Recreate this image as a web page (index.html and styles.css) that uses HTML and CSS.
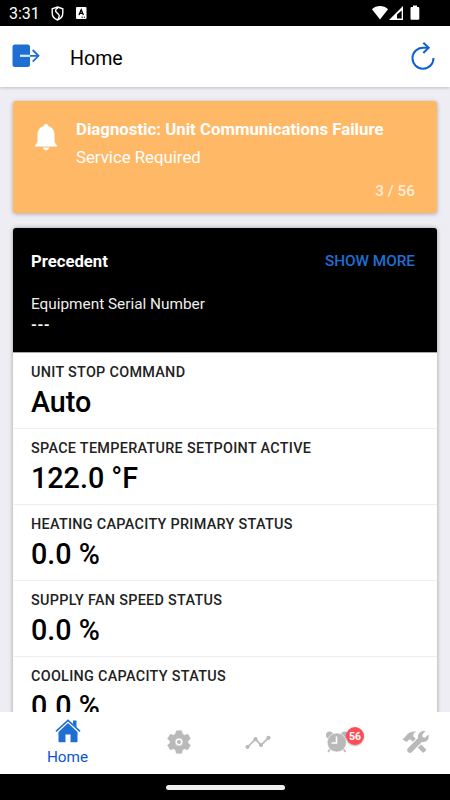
FILE: index.html
```html
<!DOCTYPE html>
<html lang="en">
<head>
    <meta charset="UTF-8">
    <meta name="viewport" content="width=device-width, initial-scale=1.0">
    <title>Home</title>
    <link rel="stylesheet" href="styles.css">
</head>
<body>
    <div class="status-bar">
        <span class="clock">3:31</span>
        <svg class="shield" width="13" height="15" viewBox="0 0 14 16" fill="none" stroke="#fff" stroke-width="1.500">
            <path d="M7 1 L12.700 3 V7.500 C12.700 11 10.300 13.800 7 15 C3.700 13.800 1.300 11 1.300 7.500 V3 Z"/>
            <path d="M7.500 2 C4 4 4.500 5.800 6.500 7.300 C9.500 9.300 9.500 11.500 7.500 14"/>
        </svg>
        <svg class="app-badge" width="11" height="12" viewBox="0 0 11 12">
            <rect width="10.500" height="12" rx="1" fill="#fff"/>
            <path d="M3 8 L5.200 2.700 L7.400 8 M3.800 6.400 H6.600" fill="none" stroke="#000" stroke-width="1.300"/>
            <path d="M5.500 10.200 H6.800 M7.800 10.200 H9" stroke="#000"/>
        </svg>
        <svg class="signals" width="49" height="15" viewBox="0 0 49 15" fill="#fff">
            <path d="M8 14.500 L0 4.200 C4.500 0 11.500 0 16 4.200 Z"/>
            <path d="M31 1 V15 H17 Z"/>
            <path d="M29.700 5.500 V13.500 H25 V9.500 Z" fill="#000"/>
            <path d="M41 0.500 H45 V2 H46.300 Q47.300 2 47.300 3 V13.800 Q47.300 14.800 46.300 14.800 H39.500 Q38.500 14.800 38.500 13.800 V3 Q38.500 2 39.500 2 H41 Z"/>
        </svg>
    </div>

    <header class="app-header">
        <svg class="logout" width="28" height="24" viewBox="0 0 28 24">
            <rect x="0.500" y="0.500" width="17.500" height="22.500" rx="2.500" fill="#1f6fd3"/>
            <path d="M8 11.800 H18" stroke="#dbe8f8" stroke-width="2.200"/>
            <path d="M18 11.800 H26.500 M20.700 6 L26.500 11.800 L20.700 17.600" fill="none" stroke="#1f6fd3" stroke-width="1.800"/>
        </svg>
        <h1>Home</h1>
        <svg class="refresh" width="24" height="28" viewBox="0 0 24 28" fill="none" stroke="#0d62d0" stroke-width="2">
            <path d="M22.500 16 A10.500 10.500 0 1 1 12 5.700 H17.500"/>
            <path d="M12.300 0.800 L17.700 5.800 L12.300 11"/>
        </svg>
    </header>

    <main class="content">
        <section class="alert">
            <svg class="bell" width="24" height="28" viewBox="0 0 24 28" fill="#fff">
                <path d="M12 0 C13.300 0 14.200 0.800 14.300 2 C18 3 20.500 6.300 20.500 10.500 V17 C20.500 19.500 23.200 20.500 23.200 22.500 H0.800 C0.800 20.500 3.500 19.500 3.500 17 V10.500 C3.500 6.300 6 3 9.700 2 C9.800 0.800 10.700 0 12 0 Z"/>
                <path d="M9 23.500 H15 C14.800 25.200 13.500 26.200 12 26.200 C10.500 26.200 9.200 25.200 9 23.500 Z"/>
            </svg>
            <div class="alert-text">
                <h2>Diagnostic: Unit Communications Failure</h2>
                <p>Service Required</p>
            </div>
            <span class="alert-count">3 / 56</span>
        </section>

        <section class="unit">
            <div class="unit-head">
                <div class="unit-title">
                    <h2>Precedent</h2>
                    <a class="show-more">SHOW MORE</a>
                </div>
                <p class="serial-label">Equipment Serial Number</p>
                <p class="serial">---</p>
            </div>
            <ul class="readings">
                <li>
                    <span class="label">UNIT STOP COMMAND</span>
                    <span class="value">Auto</span>
                </li>
                <li>
                    <span class="label">SPACE TEMPERATURE SETPOINT ACTIVE</span>
                    <span class="value">122.0 °F</span>
                </li>
                <li>
                    <span class="label">HEATING CAPACITY PRIMARY STATUS</span>
                    <span class="value">0.0 %</span>
                </li>
                <li>
                    <span class="label">SUPPLY FAN SPEED STATUS</span>
                    <span class="value">0.0 %</span>
                </li>
                <li>
                    <span class="label">COOLING CAPACITY STATUS</span>
                    <span class="value">0.0 %</span>
                </li>
            </ul>
        </section>
    </main>

    <nav class="tabs">
        <a class="tab active">
            <svg width="26" height="24" viewBox="0 0 26 24">
                <path d="M3.500 13 L13 4 L22.500 13 V22.500 Q22.500 23.300 21.700 23.300 H15.500 V15.500 H10.500 V23.300 H4.300 Q3.500 23.300 3.500 22.500 Z M18 1.500 H21.500 V8.500 L18 5 Z" fill="#1f6fd3"/>
                <path d="M1.500 13.500 L13 3 L24.500 13.500" fill="none" stroke="#fff" stroke-width="1"/>
                <path d="M1 12.300 L13 1.300 L25 12.300" fill="none" stroke="#1f6fd3" stroke-width="1.600"/>
            </svg>
            <span>Home</span>
        </a>
        <a class="tab">
            <svg width="24" height="24" viewBox="0 0 24 24" fill="#b9b9b9" fill-rule="evenodd">
                <path d="M9.300 0.800 H14.700 L15.400 4.100 L17.500 5.300 L20.700 4.200 L23.400 8.800 L20.900 11 V13 L23.400 15.200 L20.700 19.800 L17.500 18.700 L15.400 19.900 L14.700 23.200 H9.300 L8.600 19.900 L6.500 18.700 L3.300 19.800 L0.600 15.200 L3.100 13 V11 L0.600 8.800 L3.300 4.200 L6.500 5.300 L8.600 4.100 Z M12 8 A4 4 0 1 0 12 16 A4 4 0 1 0 12 8 Z" stroke="#b9b9b9" stroke-linejoin="round" stroke-width="0.600"/>
                <circle cx="12" cy="12" r="2.100"/>
            </svg>
        </a>
        <a class="tab">
            <svg width="26" height="16" viewBox="0 0 26 16" fill="#b9b9b9">
                <path d="M2.500 13 L10.500 5.300 L16 11 L23.500 3.800" fill="none" stroke="#b9b9b9" stroke-width="1.700"/>
                <circle cx="2.500" cy="13" r="2.100"/>
                <circle cx="10.500" cy="5" r="2.100"/>
                <circle cx="16" cy="11" r="2.100"/>
                <circle cx="23.500" cy="3.800" r="2.100"/>
            </svg>
        </a>
        <a class="tab alarms">
            <svg width="24" height="22" viewBox="0 0 24 22" fill="#b9b9b9">
                <circle cx="4.500" cy="4" r="3.500"/>
                <circle cx="19.500" cy="4" r="3.500"/>
                <path d="M5.500 17.500 L3 21 M18 17.500 L20.500 21" stroke="#b9b9b9" stroke-width="1.600"/>
                <circle cx="11.800" cy="11.500" r="9.600" stroke="#fff" stroke-width="0.600"/>
                <path d="M11.500 5.500 V12 H6.500" fill="none" stroke="#fff" stroke-width="1.600"/>
            </svg>
            <span class="badge">56</span>
        </a>
        <a class="tab">
            <svg width="28" height="24" viewBox="0 0 28 24" fill="#b9b9b9">
                <path d="M0.500 9.500 L4 6 C6 2.500 9 1 14.500 1.500 C11.500 2.800 10.800 4.300 11.500 6.500 L13.800 8.800 L10.800 11.700 L8.500 9.400 L7 9.700 L4.700 12 Z"/>
                <path d="M19.200 14.500 L24 19.200 Q24.500 20 23.800 20.700 L22 22.300 Q21.200 23 20.400 22.300 L15.800 17.500 Z"/>
                <path d="M8 20 L18.500 9.500" stroke="#b9b9b9" stroke-width="5.500" stroke-linecap="round"/>
                <path d="M23.500 1.300 L20.300 4.500 L20.700 7.200 L23.200 7.500 L26.500 4.500 C27.500 8.500 25.300 12 21.500 12 C18 12.300 15.500 9.500 16 5.800 C16.500 2.700 20 0.300 23.500 1.300 Z"/>
            </svg>
        </a>
    </nav>

    <div class="gesture-bar"><span></span></div>
</body>
</html>
```
FILE: styles.css
```css
* {
    box-sizing: border-box;
}
body {
    font-family: Roboto, Arial, sans-serif;
    margin: 0;
    width: 450px;
    height: 800px;
    display: flex;
    flex-direction: column;
    overflow: hidden;
    background-color: #eeedf3;
}
h1, h2, p, ul {
    margin: 0;
    padding: 0;
    font-weight: 400;
}
svg {
    display: block;
    flex: none;
}
.status-bar {
    flex: none;
    height: 26px;
    display: flex;
    align-items: center;
    padding: 1px 29px 0 9px;
    background-color: #000;
    color: #fff;
}
.clock {
    width: 42px;
    font-size: 16px;
    line-height: 26px;
}
.shield {
    margin-top: -1px;
}
.app-badge {
    margin: -1px 0 0 12px;
}
.signals {
    margin: -2px 0 0 auto;
}
.app-header {
    flex: none;
    height: 61px;
    display: flex;
    align-items: center;
    padding: 0 15px 0 12px;
    background-color: #fff;
    box-shadow: 0 1px 3px rgba(0, 0, 0, 0.2);
    z-index: 1;
}
.logout {
    margin-top: -2px;
}
.app-header h1 {
    margin-left: 30px;
    padding-top: 4px;
    font-size: 19.6px;
}
.refresh {
    margin-left: auto;
    margin-top: -2px;
}
.content {
    flex: 1;
    min-height: 0;
    overflow: hidden;
    padding: 14px 13px 0;
}
.alert {
    height: 112px;
    display: grid;
    grid-template-columns: 43px 1fr;
    grid-template-rows: 1fr auto;
    padding: 18px 22px 12px 20px;
    border-radius: 3px;
    background-color: #ffb865;
    color: #fff;
    box-shadow: 0 1px 4px rgba(0, 0, 0, 0.3);
}
.bell {
    margin: 5px 0 0 1px;
}
.alert h2 {
    font-size: 16.8px;
    font-weight: 700;
    line-height: 20px;
    white-space: nowrap;
}
.alert p {
    margin-top: 8px;
    font-size: 16.8px;
    line-height: 20px;
}
.alert-count {
    grid-column: 2;
    text-align: right;
    font-size: 15.3px;
    font-weight: 500;
    line-height: 20px;
    opacity: 0.75;
}
.unit {
    margin-top: 15px;
    border-radius: 4px 4px 0 0;
    background-color: #fff;
    box-shadow: 0 0 4px rgba(0, 0, 0, 0.35);
}
.unit-head {
    height: 124px;
    padding: 23px 22px 0 18px;
    border-radius: 3px 3px 0 0;
    background-color: #000;
    color: #fff;
}
.unit-title {
    display: flex;
    justify-content: space-between;
    line-height: 20px;
}
.unit-title h2 {
    padding-top: 1px;
    font-size: 16.7px;
    font-weight: 700;
}
.show-more {
    color: #1f6fd3;
    font-size: 15.3px;
    font-weight: 500;
}
.serial-label {
    margin-top: 22px;
    font-size: 15.35px;
    line-height: 20px;
    color: #eee;
}
.serial {
    margin-top: 1px;
    font-size: 15px;
    font-weight: 700;
    line-height: 20px;
    letter-spacing: 0.5px;
}
.readings {
    list-style: none;
    border-top: 1px solid #aaa;
}
.readings li {
    height: 75.9px;
    margin-left: 1px;
    padding: 10px 17px 0;
    border-bottom: 1px solid #ededed;
}
.label, .value {
    display: block;
    font-weight: 500;
}
.label {
    font-size: 14.4px;
    line-height: 20px;
    letter-spacing: 0.3px;
    color: #222;
}
.value {
    font-size: 28.7px;
    line-height: 38px;
    color: #000;
}
.tabs {
    flex: none;
    height: 62px;
    display: grid;
    grid-template-columns: 139px repeat(4, 79px);
    background-color: #fff;
    z-index: 1;
}
.tab {
    position: relative;
    display: flex;
    flex-direction: column;
    align-items: center;
    justify-content: center;
    padding-bottom: 2px;
}
.tab.active {
    justify-content: flex-start;
    padding: 7px 4px 0 0;
    color: #0b55d4;
    font-size: 15.3px;
    line-height: 18px;
}
.tab.active span {
    margin-top: 5px;
}
.badge {
    position: absolute;
    top: 15px;
    right: 12px;
    width: 18px;
    height: 18px;
    border-radius: 50%;
    background-color: #ff4d58;
    color: #fff;
    font-size: 10.5px;
    font-weight: 700;
    line-height: 19px;
    text-align: center;
    box-shadow: 0 1px 2px rgba(0, 0, 0, 0.3);
}
.gesture-bar {
    flex: none;
    height: 26px;
    display: flex;
    align-items: center;
    justify-content: center;
    background-color: #000;
}
.gesture-bar span {
    width: 119px;
    height: 5px;
    border-radius: 3px;
    background-color: #eee;
}
```
